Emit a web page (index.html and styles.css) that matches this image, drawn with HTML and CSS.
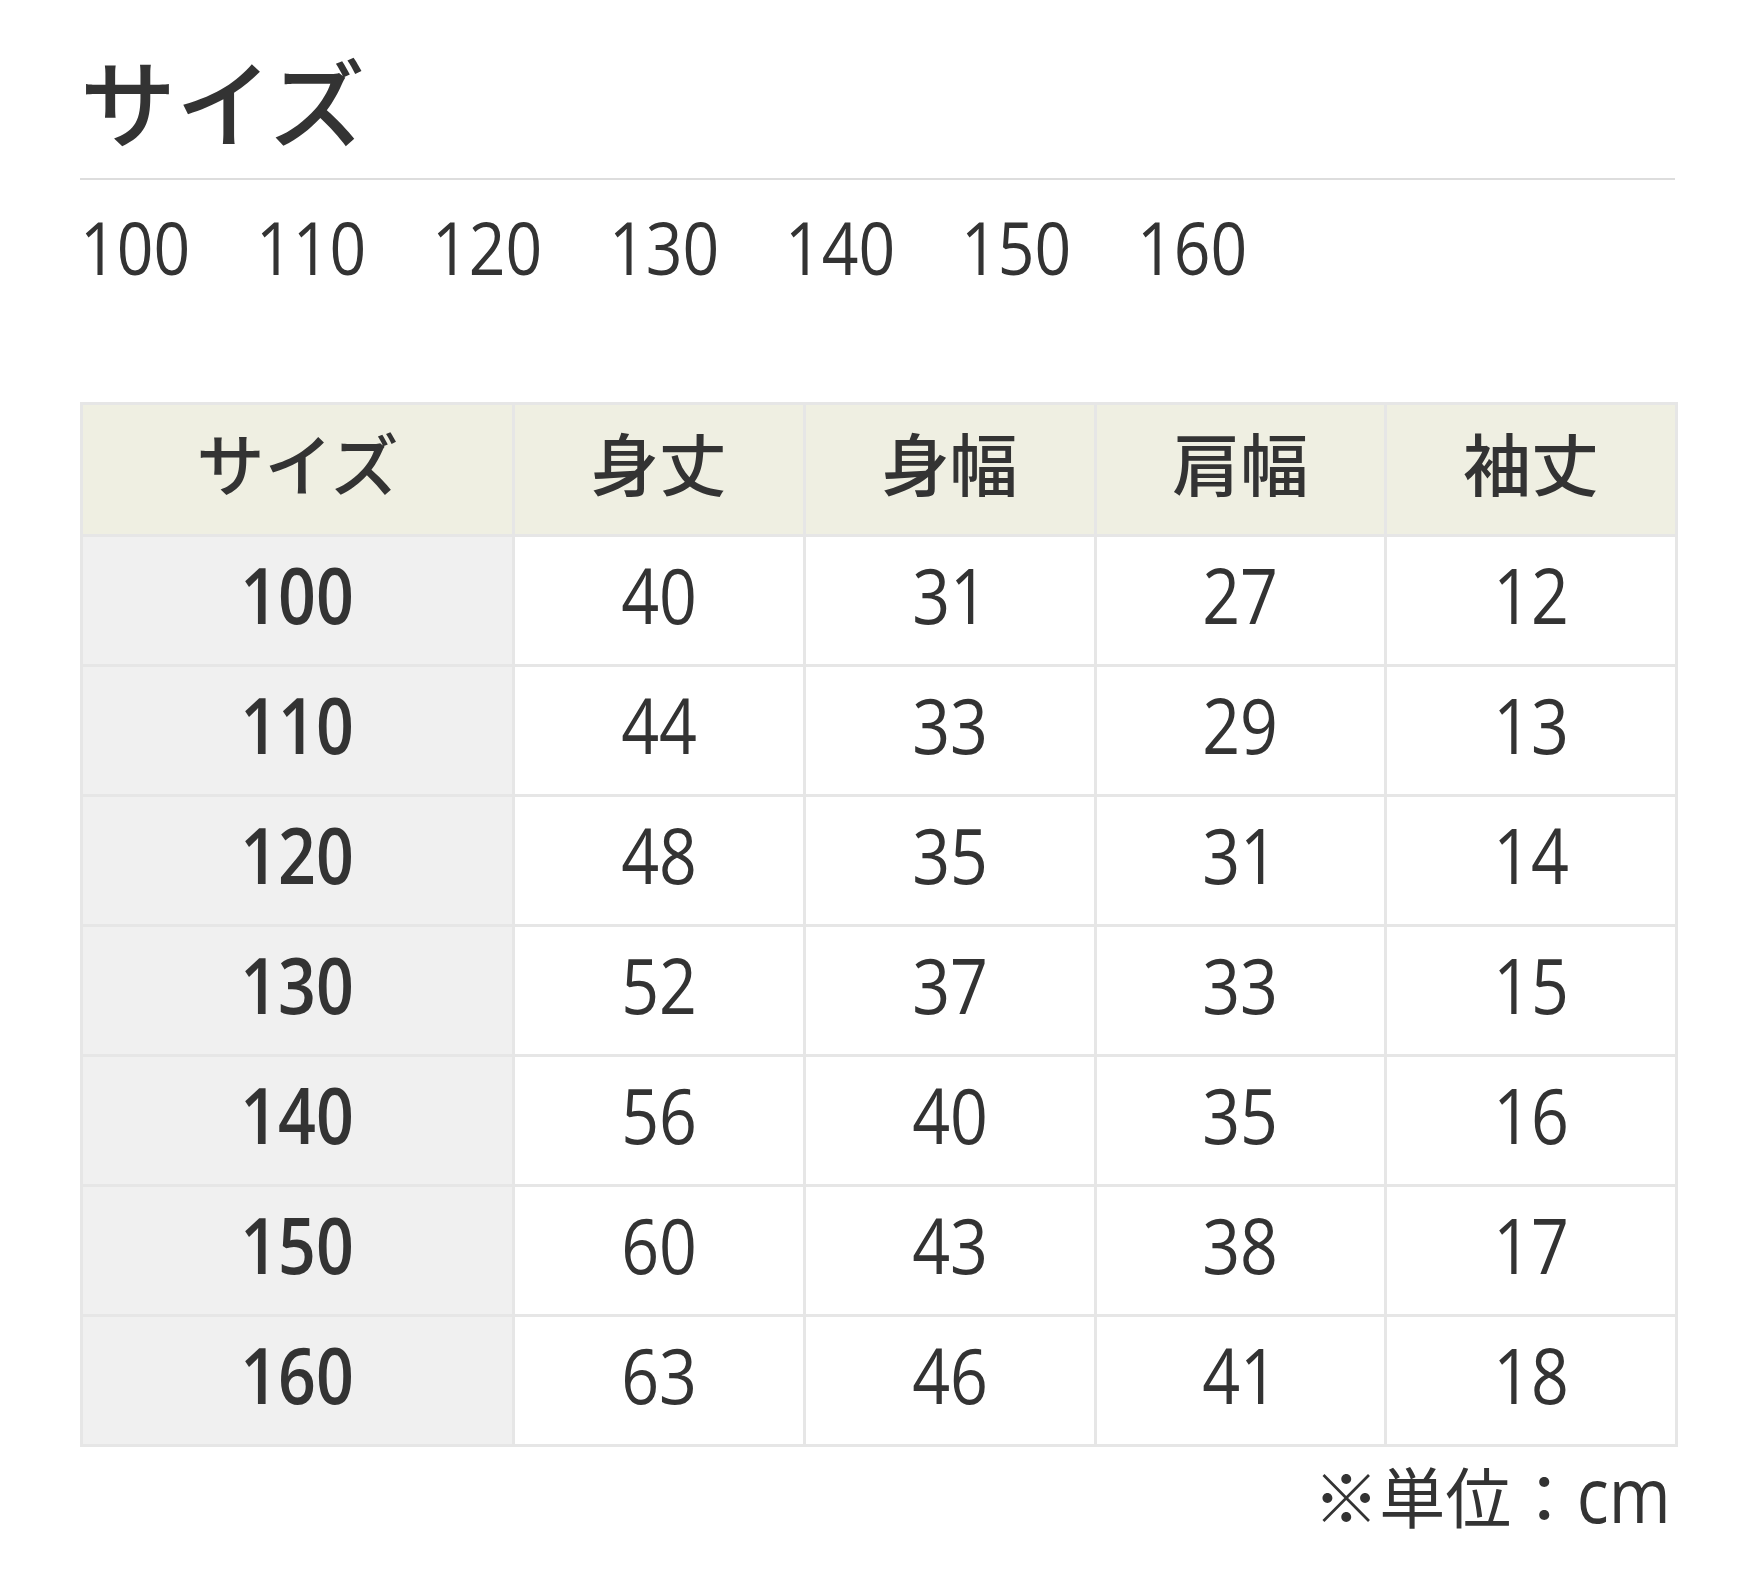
FILE: index.html
```html
<!DOCTYPE html>
<html lang="ja">
<head>
<meta charset="utf-8">
<title>サイズ</title>
<link rel="stylesheet" href="styles.css">
</head>
<body>
<div class="page">
  <h1 class="title">サイズ</h1>
  <ul class="size-list">
    <li>100</li>
    <li>110</li>
    <li>120</li>
    <li>130</li>
    <li>140</li>
    <li>150</li>
    <li>160</li>
  </ul>
  <table class="size-table">
    <colgroup>
      <col class="col-size">
      <col class="col-data">
      <col class="col-data">
      <col class="col-data">
      <col class="col-data">
    </colgroup>
    <thead>
      <tr><th>サイズ</th><th>身丈</th><th>身幅</th><th>肩幅</th><th>袖丈</th></tr>
    </thead>
    <tbody>
      <tr><th><span class="num">100</span></th><td><span class="num">40</span></td><td><span class="num">31</span></td><td><span class="num">27</span></td><td><span class="num">12</span></td></tr>
      <tr><th><span class="num">110</span></th><td><span class="num">44</span></td><td><span class="num">33</span></td><td><span class="num">29</span></td><td><span class="num">13</span></td></tr>
      <tr><th><span class="num">120</span></th><td><span class="num">48</span></td><td><span class="num">35</span></td><td><span class="num">31</span></td><td><span class="num">14</span></td></tr>
      <tr><th><span class="num">130</span></th><td><span class="num">52</span></td><td><span class="num">37</span></td><td><span class="num">33</span></td><td><span class="num">15</span></td></tr>
      <tr><th><span class="num">140</span></th><td><span class="num">56</span></td><td><span class="num">40</span></td><td><span class="num">35</span></td><td><span class="num">16</span></td></tr>
      <tr><th><span class="num">150</span></th><td><span class="num">60</span></td><td><span class="num">43</span></td><td><span class="num">38</span></td><td><span class="num">17</span></td></tr>
      <tr><th><span class="num">160</span></th><td><span class="num">63</span></td><td><span class="num">46</span></td><td><span class="num">41</span></td><td><span class="num">18</span></td></tr>
    </tbody>
  </table>
  <p class="unit-note">※単位：<span class="unit">cm</span></p>
</div>
</body>
</html>
```
FILE: styles.css
```css
* { box-sizing: border-box; }
html, body { margin: 0; padding: 0; background: #ffffff; }
body {
  font-family: "Open Sans", "Noto Sans CJK JP", sans-serif;
  color: #333333;
}
.page {
  width: 1595px;
  margin-left: 80px;
  padding-top: 44px;
}
.title {
  margin: 0;
  font-family: "Noto Sans CJK JP", sans-serif;
  font-size: 96px;
  font-weight: 500;
  line-height: 110px;
  padding-bottom: 24px;
  border-bottom: 2px solid #dddddd;
}
.size-list {
  list-style: none;
  margin: 23px 0 0 0;
  padding: 0;
  display: flex;
  gap: 51px;
  font-size: 73px;
  line-height: 88px;
}
.size-list li {
  transform: scaleX(0.88);
  transform-origin: left center;
}
.size-table {
  margin-top: 111px;
  width: 1595px;
  table-layout: fixed;
  border-collapse: collapse;
  border: 3px solid #e6e6e6;
}
.col-size { width: 432px; }
.col-data { width: 290.75px; }
.size-table th,
.size-table td {
  border: 3px solid #e6e6e6;
  text-align: center;
  vertical-align: middle;
  padding: 0 0 12px 0;
  height: 130px;
  font-size: 77px;
}
.num {
  display: inline-block;
  transform: scaleX(0.86);
}
.size-table thead th {
  height: 132px;
  background: #efefe2;
  font-family: "Noto Sans CJK JP", sans-serif;
  font-size: 68px;
  font-weight: 500;
  padding-bottom: 16px;
}
.size-table td { font-weight: 400; background: #ffffff; }
.size-table tbody th { font-weight: 600; background: #f0f0f0; }
.unit-note {
  margin: 7px 0 0 0;
  text-align: right;
  font-size: 66px;
  line-height: 80px;
  padding-right: 4px;
}
.unit {
  display: inline-block;
  font-size: 76px;
  margin-left: -13px;
  transform: scaleX(0.88);
  transform-origin: right center;
}
```
